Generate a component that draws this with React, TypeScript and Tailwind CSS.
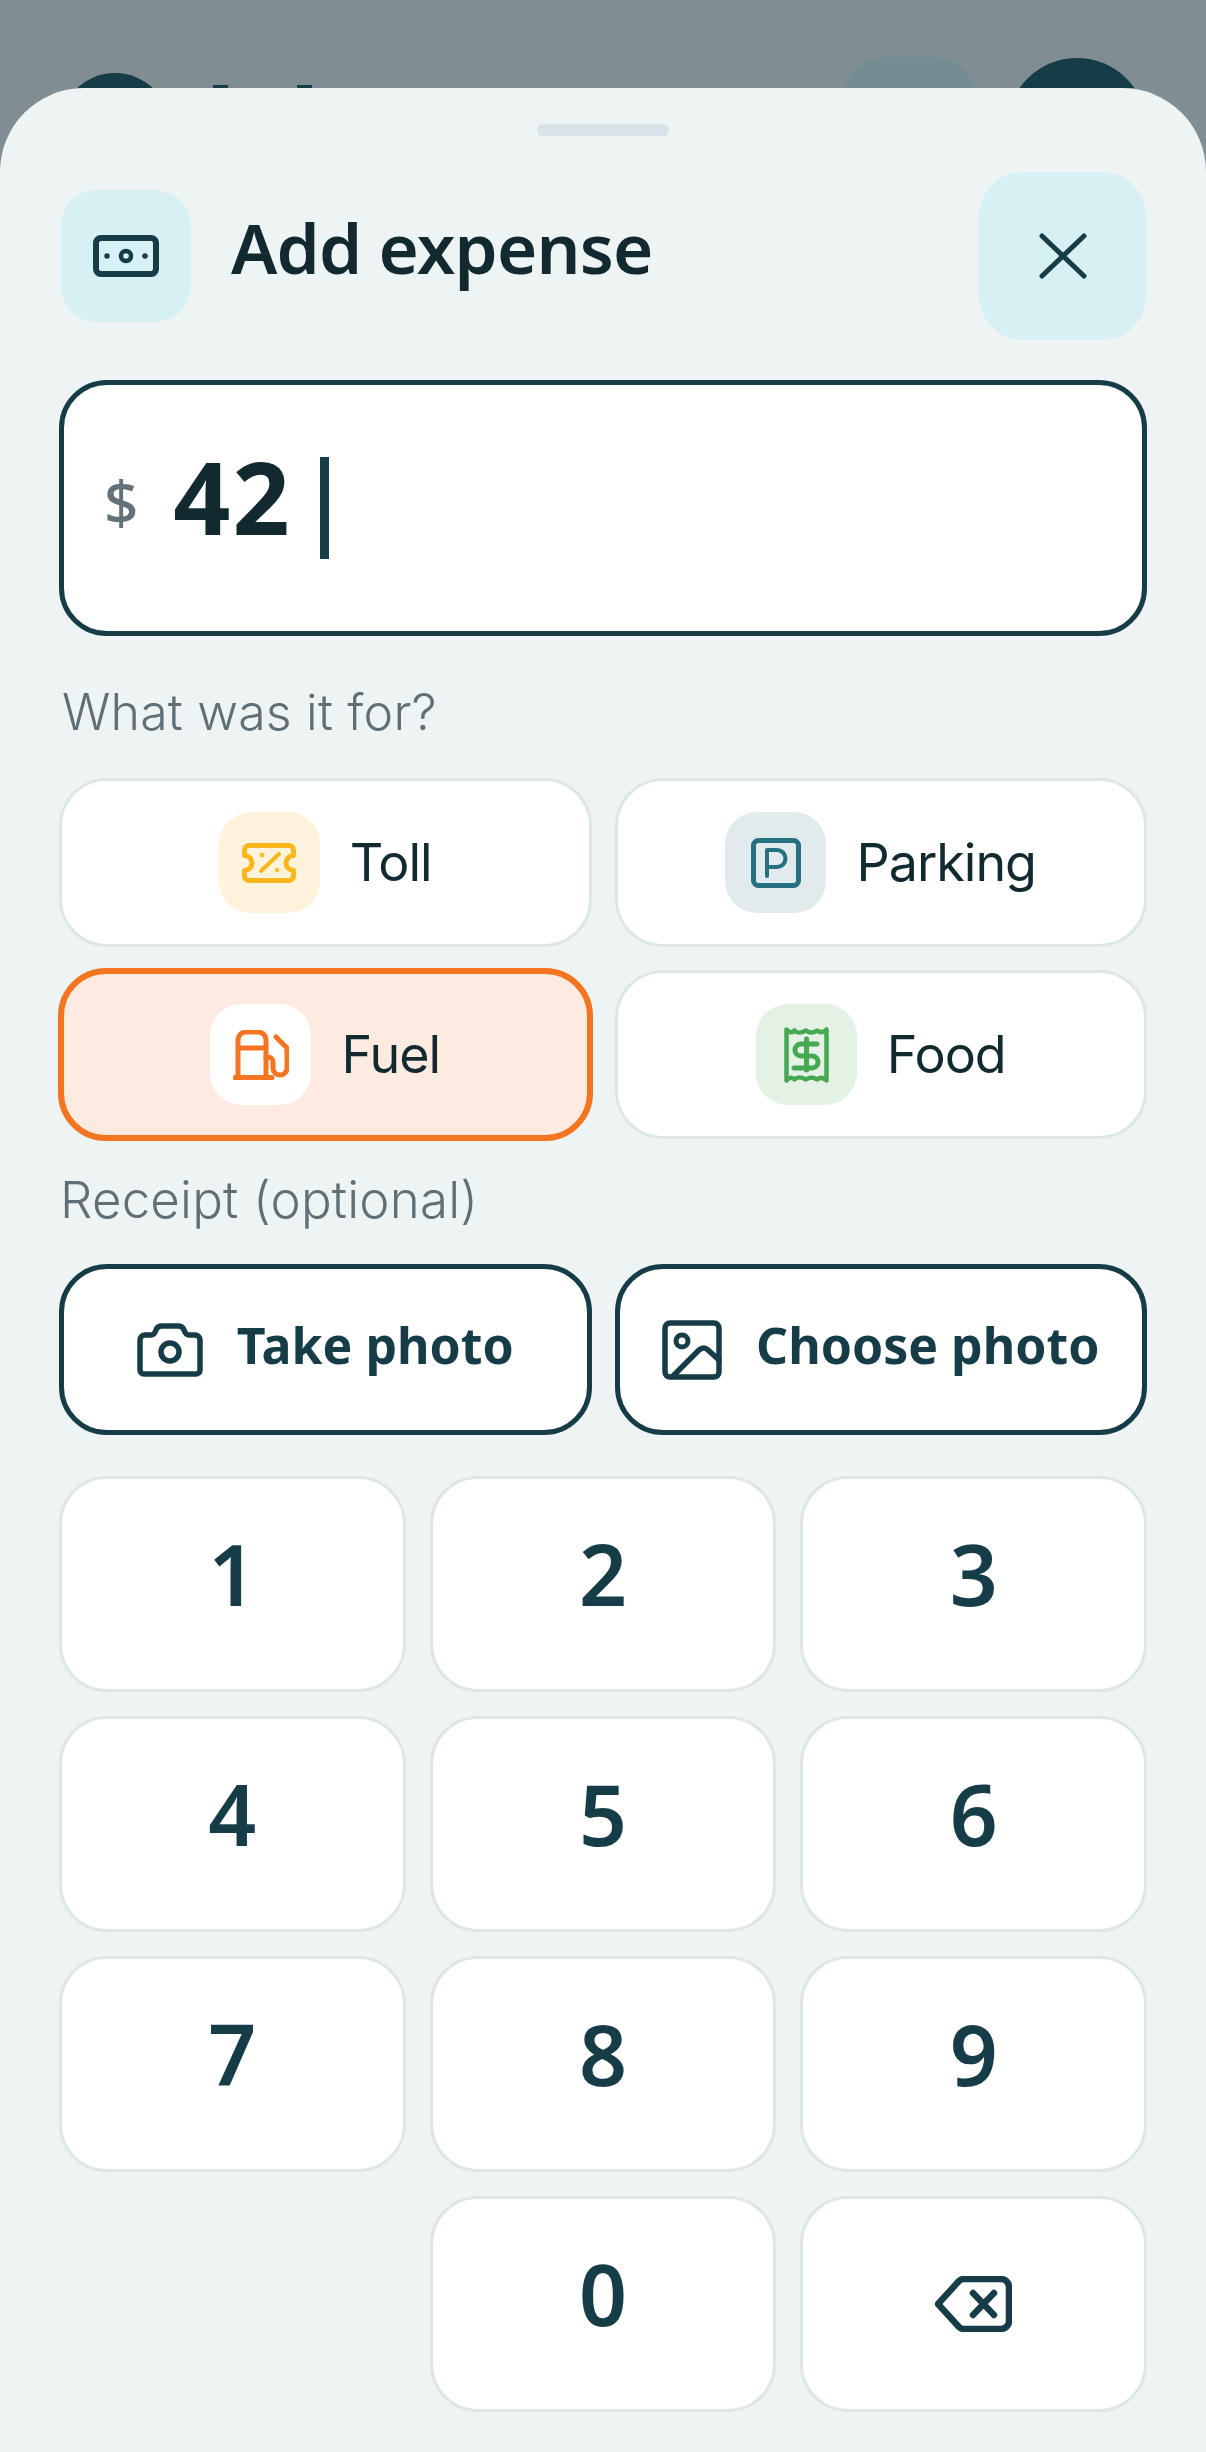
import { ReactNode } from "react";

const DARK = "#163c47";

const CashIcon = () => (
  <svg width="66" height="42" viewBox="0 0 66 42" fill="none" stroke={DARK} strokeWidth="6">
    <rect x="3" y="3" width="60" height="36" rx="5" />
    <circle cx="33" cy="21" r="5" strokeWidth="4.5" />
    <circle cx="14" cy="21" r="1.5" fill={DARK} strokeWidth="2.5" />
    <circle cx="52" cy="21" r="1.5" fill={DARK} strokeWidth="2.5" />
  </svg>
);

const TicketIcon = () => (
  <svg width="54" height="40" viewBox="0 0 54 40" fill="none" stroke="#fdb71c" strokeWidth="5" strokeLinecap="round" strokeLinejoin="round">
    <path d="M7 2.5h40a4.5 4.5 0 0 1 4.5 4.5v5.500a7.500 7.500 0 0 0 0 15V33a4.500 4.500 0 0 1-4.500 4.500H7A4.500 4.500 0 0 1 2.500 33v-5.500a7.500 7.500 0 0 0 0-15V7A4.500 4.500 0 0 1 7 2.500z" />
    <path d="M19 28 37 11" strokeWidth="4" />
    <circle cx="20" cy="12" r="0.8" fill="#fdb71c" strokeWidth="3" />
    <circle cx="35" cy="27" r="0.8" fill="#fdb71c" strokeWidth="3" />
  </svg>
);

const ParkingIcon = () => (
  <svg width="50" height="50" viewBox="0 0 50 50" fill="none" stroke="#26707f" strokeWidth="5" strokeLinecap="round" strokeLinejoin="round">
    <rect x="2.5" y="2.5" width="45" height="45" rx="5" />
    <path d="M16 38V12h10a8.500 8.500 0 0 1 0 17H16" strokeWidth="4" />
  </svg>
);

const FuelIcon = () => (
  <svg width="56" height="50" viewBox="0 0 56 50" fill="none" stroke="#f47521" strokeWidth="5" strokeLinecap="round" strokeLinejoin="round">
    <path d="M2 47.5h37" />
    <path d="M5 47V10a8 8 0 0 1 8-8h12a8 8 0 0 1 8 8v37" />
    <path d="M5 18h28" />
    <path d="M33 27h2a5 5 0 0 1 5 5v6a7 7 0 0 0 14 0V18L43 7" />
  </svg>
);

const ReceiptIcon = () => (
  <svg width="45" height="56" viewBox="0 0 45 56" fill="none" stroke="#46a851" strokeWidth="4.5" strokeLinecap="round" strokeLinejoin="round">
    <path d="M2.5 2.5c3 3.5 6 3.5 8 1 3 3 6 3 11.500 0 4 3 7 3 11 0 3 2.500 6 2.500 9.500-1v51c-3.500-3.500-6.500-3.500-9.500-1-4-3-7-3-11 0-5.500-3-8.500-3-11.500 0-2-2.500-5-2.500-8 1z" />
    <path d="M33 17H17a6 6 0 0 0 0 12h11a6 6 0 0 1 0 12H10" strokeWidth="5" />
    <path d="M22.500 12v31" strokeWidth="5" />
  </svg>
);

const CameraIcon = () => (
  <svg width="66" height="54" viewBox="0 0 66 54" fill="none" stroke={DARK} strokeWidth="5.5" strokeLinecap="round" strokeLinejoin="round">
    <path d="M3 17a5 5 0 0 1 5-5h6c3 0 4-2 5-5 1-3 3-4 6-4h16c3 0 5 1 6 4 1 3 2 5 5 5h6a5 5 0 0 1 5 5v30a4 4 0 0 1-4 4H7a4 4 0 0 1-4-4z" />
    <circle cx="33" cy="29" r="9" />
  </svg>
);

const PhotoIcon = () => (
  <svg width="60" height="60" viewBox="0 0 60 60" fill="none" stroke={DARK} strokeWidth="5.5" strokeLinecap="round" strokeLinejoin="round">
    <rect x="3" y="3" width="54" height="54" rx="5" />
    <circle cx="20" cy="21" r="6" strokeWidth="5" />
    <path d="M11 56 37 30q5-4 9 0l11 10" />
  </svg>
);

const BackspaceIcon = () => (
  <svg width="77" height="56" viewBox="0 0 77 56" fill="none" stroke={DARK} strokeWidth="6.5" strokeLinecap="round" strokeLinejoin="round">
    <path d="M29 3h37a8 8 0 0 1 8 8v34a8 8 0 0 1-8 8H29q-3 0-5-2L3 28 24 5q2-2 5-2z" />
    <path d="M38 17l21 22M59 17 38 39" />
  </svg>
);

const CloseIcon = () => (
  <svg width="48" height="46" viewBox="0 0 48 46" fill="none" stroke={DARK} strokeWidth="5" strokeLinecap="round">
    <path d="M3 3l42 40M45 3 3 43" />
  </svg>
);

interface CategoryProps {
  label: string;
  tile: string;
  icon: ReactNode;
  selected?: boolean;
}

const Category = ({ label, tile, icon, selected }: CategoryProps) => (
  <button
    className={
      selected
        ? "-mt-[2px] -mx-[1px] h-[173px] rounded-[48px] border-[6px] border-[#f47521] bg-[#fdebe1] flex items-center justify-center gap-[30px]"
        : "h-[169px] rounded-[48px] border-[3px] border-[#dde7e8] bg-white flex items-center justify-center gap-[30px]"
    }
  >
    <span className={`w-[101px] h-[101px] rounded-[32px] flex items-center justify-center ${tile}`}>{icon}</span>
    <span className="text-[52px] font-normal tracking-[-1px] text-[#12292f]">{label}</span>
  </button>
);

const PhotoButton = ({ label, icon }: { label: string; icon: ReactNode }) => (
  <button className="h-[171px] rounded-[48px] border-[5px] border-[#163c47] bg-white flex items-center justify-center gap-[34px]">
    {icon}
    <span className="pb-[8px] font-['Noto_Sans',sans-serif] text-[50px] font-bold text-[#163c47]">{label}</span>
  </button>
);

const Key = ({ children }: { children: ReactNode }) => (
  <button className="h-[216px] rounded-[48px] border-[3px] border-[#dde7e8] bg-white flex items-center justify-center">
    {children}
  </button>
);

const Digit = ({ value }: { value: string }) => (
  <Key>
    <span className="pb-[20px] font-['Noto_Sans',sans-serif] text-[84px] font-semibold text-[#163c47]">{value}</span>
  </Key>
);

export default function App() {
  return (
    <div className="w-[1206px] h-[2452px] bg-[#808e93] overflow-hidden font-['Inter',sans-serif]">
      <div className="h-[88px] overflow-hidden pl-[60px] pr-[59px] flex items-start">
        <div className="mt-[73px] w-[110px] h-[110px] rounded-full bg-[#163c47]" />
        <div className="mt-[85px] ml-[43px] w-[15px] h-[10px] bg-[#163c47]" />
        <div className="mt-[85px] ml-[69px] w-[15px] h-[10px] bg-[#163c47]" />
        <div className="ml-auto mt-[57px] w-[134px] h-[134px] rounded-[44px] bg-[#738c93]" />
        <div className="ml-[30px] mt-[58px] w-[140px] h-[140px] rounded-full bg-[#163c47]" />
      </div>
      <div className="h-[2364px] rounded-t-[84px] bg-[#eef3f4] px-[59px]">
        <div className="pt-[36px] flex justify-center">
          <div className="w-[132px] h-[12px] rounded-full bg-[#d9e2e6]" />
        </div>
        <div className="mt-[36px] h-[168px] flex items-center">
          <div className="ml-[2px] w-[130px] h-[132px] rounded-[36px] bg-[#d6f0f3] flex items-center justify-center">
            <CashIcon />
          </div>
          <h1 className="ml-[40px] pb-[16px] font-['Noto_Sans',sans-serif] text-[69px] font-semibold tracking-[-0.8px] text-[#12292f]">Add expense</h1>
          <button className="ml-auto mr-[1px] w-[167px] h-[168px] rounded-[44px] bg-[#d6f0f3] flex items-center justify-center">
            <CloseIcon />
          </button>
        </div>
        <div className="mt-[40px] h-[256px] rounded-[48px] border-[5px] border-[#163c47] bg-white flex items-center pl-[40px]">
          <span className="pb-[14px] font-['Noto_Sans',sans-serif] text-[60px] font-medium text-[#637278]">$</span>
          <span className="ml-[35px] pb-[24px] font-['Noto_Sans',sans-serif] text-[100px] font-bold tracking-[2px] text-[#12292f]">42</span>
          <span className="ml-[28px] w-[9px] h-[102px] bg-[#163c47]" />
        </div>
        <p className="mt-[40px] pl-[3px] text-[50px] font-light tracking-[0.2px] text-[#5f6f75] leading-[72px]">What was it for?</p>
        <div className="mt-[30px] grid grid-cols-2 gap-x-[23px] gap-y-[23px]">
          <Category label="Toll" tile="bg-[#fff3dc]" icon={<TicketIcon />} />
          <Category label="Parking" tile="bg-[#e1eaed]" icon={<ParkingIcon />} />
          <Category label="Fuel" tile="bg-white" icon={<FuelIcon />} selected />
          <Category label="Food" tile="bg-[#e3f2e4]" icon={<ReceiptIcon />} />
        </div>
        <p className="mt-[23px] pl-[1px] text-[51px] font-light tracking-[0.2px] text-[#5f6f75] leading-[72px]">Receipt (optional)</p>
        <div className="mt-[28px] grid grid-cols-2 gap-x-[23px]">
          <PhotoButton label="Take photo" icon={<CameraIcon />} />
          <PhotoButton label="Choose photo" icon={<PhotoIcon />} />
        </div>
        <div className="mt-[41px] grid grid-cols-3 gap-[24px]">
          {["1", "2", "3", "4", "5", "6", "7", "8", "9"].map((n) => (
            <Digit key={n} value={n} />
          ))}
          <div />
          <Digit value="0" />
          <Key>
            <BackspaceIcon />
          </Key>
        </div>
      </div>
    </div>
  );
}
